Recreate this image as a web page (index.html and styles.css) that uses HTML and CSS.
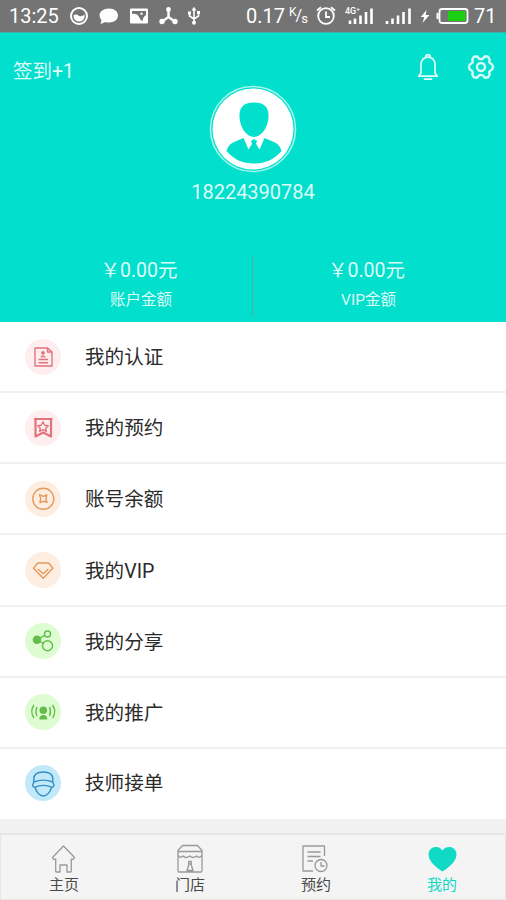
FILE: index.html
```html
<!DOCTYPE html>
<html lang="zh-CN">
<head>
<meta charset="utf-8">
<title>我的</title>
<link rel="stylesheet" href="styles.css">
</head>
<body>
<div class="app">
  <div class="status">
    <div class="status-left">
      <span class="time">13:25</span>
      <svg width="20" height="20" viewBox="0 0 20 20"><circle cx="10" cy="10" r="8" fill="none" stroke="#fff" stroke-width="2"/><path d="M4.500 9.500Q7 7.500 10 10Q13 11 15.500 8.500A5.600 5.600 0 1 1 4.500 9.500Z" fill="#fff"/></svg>
      <svg width="20" height="20" viewBox="0 0 20 20"><path d="M10 2.500C15.500 2.500 19 5.500 19 9.500S15.500 16.500 10 16.500Q8 16.500 6.500 16L1.500 18L2.500 14Q.5 12 .5 9.500C.5 5.500 4.500 2.500 10 2.500Z" fill="#fff"/></svg>
      <svg width="20" height="20" viewBox="0 0 20 20"><path fill="#fff" fill-rule="evenodd" d="M2 2.500H18Q19 2.500 19 3.500V16.500Q19 17.500 18 17.500H2Q1 17.500 1 16.500V3.500Q1 2.500 2 2.500ZM3 5V8Q8 7 10 11Q11 14 14 15Q13 12 17 9V5ZM12.500 6.500a1.200 1.200 0 1 0 .1 0Z"/></svg>
      <svg width="20" height="20" viewBox="0 0 20 20"><g stroke="#fff" stroke-width="2.400" fill="#fff"><path d="M9.500 4V11L4 15M9.500 11L15 15" fill="none"/><circle cx="9.500" cy="3.500" r="1.200"/><circle cx="3" cy="15.500" r="1.500"/><circle cx="16" cy="15.500" r="1.500"/></g></svg>
      <svg class="usb" width="14" height="20" viewBox="0 0 14 20"><path d="M7 3V17M2.500 7V10L7 13M11.500 6V10L7 13" fill="none" stroke="#fff" stroke-width="1.600"/><path d="M7 .8L9.500 4.500H4.500ZM1 5.500H4V8.500H1ZM10 5H13V8H10Z" fill="#fff"/><circle cx="7" cy="16.800" r="2" fill="#fff"/></svg>
    </div>
    <div class="status-right">
      <span class="speed">0.17</span>
      <span class="unit"><sup>K</sup>/<sub>s</sub></span>
      <svg class="alarm" width="20" height="20" viewBox="0 0 20 20"><g fill="none" stroke="#fff" stroke-width="1.800"><circle cx="10" cy="10" r="7.800"/><path d="M10 5.500V11H14M1 4.500L5 1.200M19 4.500L15 1.200"/></g></svg>
      <span class="network"><span class="generation">4G⁺</span><svg width="30" height="20" viewBox="0 0 30 20"><path d="M4 18V14.500M9 18V12.500M14.500 18V9.500M20 18V6M25.500 18V2.500" stroke="#fff" stroke-width="2.600"/></svg></span>
      <svg class="signal" width="28" height="20" viewBox="0 0 28 20"><path d="M2 18V15M7.500 18V12.500M13 18V9.500M18.500 18V6M24.500 18V2.500" stroke="#fff" stroke-width="2.600"/></svg>
      <svg class="bolt" width="10" height="20" viewBox="0 0 10 20"><path d="M6.500 4L.8 11H4.300L2.500 17L9.500 9H5.700Z" fill="#fff"/></svg>
      <svg class="battery" width="34" height="20" viewBox="0 0 34 20"><rect x="3.500" y="3" width="28" height="14" rx="2.500" fill="none" stroke="#fff" stroke-width="1.800"/><path d="M1.500 7V13" stroke="#fff" stroke-width="2"/><path d="M12 5H29.500V15H12Z" fill="#1bd013"/></svg>
      <span class="level">71</span>
    </div>
  </div>

  <header class="profile">
    <div class="toolbar">
      <span class="checkin">签到+1</span>
      <div class="actions">
        <svg width="24" height="30" viewBox="0 0 24 30"><g fill="none" stroke="#fff" stroke-opacity=".88" stroke-width="1.700" stroke-linecap="round" stroke-linejoin="round"><path d="M10 4V3Q10 1.700 12 1.700T14 3V4M5 20V11C5 7 8 4.200 12 4.200S19 7 19 11V20L21.300 23.200H2.700ZM8.500 26.200H15.500"/></g></svg>
        <svg width="28" height="28" viewBox="0 0 28 28"><g fill="none" stroke="#fff" stroke-opacity=".85" stroke-width="2.400" stroke-linejoin="round"><path d="M7 2.700L10 2.200L12 4.600Q14 5.600 16 4.600L18 2.200L21 2.700L22.700 5.500L22.200 8Q23 9.500 25.200 10.500L26 13L25.200 15.500Q23 16.500 22.200 18L22.700 20.500L21 23.300L18 23.800L16 21.400Q14 20.400 12 21.400L10 23.800L7 23.300L5.300 20.500L5.800 18Q5 16.500 2.800 15.500L2 13L2.800 10.500Q5 9.500 5.800 8L5.300 5.500Z"/><circle cx="14" cy="13" r="4"/></g></svg>
      </div>
    </div>
    <svg class="avatar" width="88" height="88" viewBox="0 0 88 88"><circle cx="44" cy="44" r="42.500" fill="none" stroke="#a5f5e9" stroke-width="1.600"/><circle cx="44" cy="44" r="40.500" fill="#fff"/><path d="M45 17.500C55 17.500 60 22 59.500 32C59 43 52 52 45 52S31 43 30.500 32C30 22 35 17.500 45 17.500ZM34.500 53L39.500 64.500L43 59L42 56L45 54L48 56L47 59L50.500 64.500L55.500 53L66 57.500Q71 60 72.500 66Q62 78.500 45 78.500T17.500 66Q19 60 24 57.500Z" fill="#02dfcd"/><path d="M43 59L41.500 66L45 73L48.500 66L47 59Z" fill="#02dfcd"/></svg>
    <div class="phone">18224390784</div>
    <div class="balances">
      <div class="balance"><div class="amount">￥0.00元</div><div class="caption">账户金额</div></div>
      <div class="balance"><div class="amount">￥0.00元</div><div class="caption">VIP金额</div></div>
    </div>
  </header>

  <main class="menu">
    <div class="row"><span class="badge red"><svg viewBox="0 0 36 36"><path d="M10 9H22.500L27 13V27H10ZM22.500 9V13H27M13.500 20.500H23M13.500 23.700H23"/><circle class="solid" cx="18" cy="13.800" r="1.900"/><path class="solid" d="M15 18.300Q18 14 21 18.300Z"/></svg></span><span class="label">我的认证</span></div>
    <div class="row"><span class="badge red"><svg viewBox="0 0 36 36"><path class="bold" d="M9 9H27.500M10.500 9V26.500L18.200 22.500L26 26.500V9"/><path d="M18 11.700L19.700 15.200L23.300 15.700L20.700 18.200L21.400 21.300L18 19.700L14.600 21.300L15.300 18.200L12.700 15.700L16.300 15.200Z"/></svg></span><span class="label">我的预约</span></div>
    <div class="row"><span class="badge orange"><svg viewBox="0 0 36 36"><circle cx="18.300" cy="17.800" r="10.500"/><path d="M14.500 13.700L18.300 15.300L21.800 14L20.800 17.800L22 21.300L18.300 20.300L14.800 21.500L15.800 17.800Z"/></svg></span><span class="label">账号余额</span></div>
    <div class="row"><span class="badge orange"><svg viewBox="0 0 36 36"><path d="M12.800 11H23.700L27.800 16.300L18.200 26.200L8.500 16.300ZM13 17L18.200 21.700L23.400 17"/></svg></span><span class="label">我的VIP</span></div>
    <div class="row"><span class="badge green"><svg viewBox="0 0 36 36"><circle class="solid" cx="12" cy="16.700" r="4.300"/><path d="M15 15L20 12.200M15 18.500L18.500 20.500"/><circle cx="22.500" cy="11" r="3"/><circle cx="22.500" cy="22.700" r="5"/></svg></span><span class="label">我的分享</span></div>
    <div class="row"><span class="badge green"><svg viewBox="0 0 36 36"><circle class="solid" cx="18.300" cy="16.300" r="3.800"/><path class="solid" d="M14.300 25.500Q14.300 21 18.300 21T22.300 25.500Z"/><path d="M12 13Q10 17.500 12 22M9 11Q4.500 17.500 9 24M24.500 13Q26.500 17.500 24.500 22M27.500 11Q32 17.500 27.500 24"/></svg></span><span class="label">我的推广</span></div>
    <div class="row"><span class="badge blue"><svg viewBox="0 0 36 36"><path d="M8.800 17V14Q8.800 7 18.300 7T27.800 14V17M8.800 17Q18.300 13.300 27.800 17L29 20Q29 22 27 22.300Q18.300 18.500 9.600 22.300Q7.600 22 7.600 20ZM10 22.500C11.500 27.500 15 31 18.300 31S25.100 27.500 26.600 22.500"/></svg></span><span class="label">技师接单</span></div>
  </main>

  <nav class="tabs">
    <div class="tab"><svg width="30" height="30" viewBox="0 0 30 30"><path d="M14.500 2L25.500 13.500L24 15.500L22.300 15V27Q22.300 28 21.500 28H18V21H11V28H7.500Q6.700 28 6.700 27V15L5 15.500L3.500 13.500Z"/></svg><span>主页</span></div>
    <div class="tab"><svg width="30" height="30" viewBox="0 0 30 30"><path d="M7.500 1.500H22.500L27 6.500V27Q27 28 26 28H4Q3 28 3 27V6.500ZM3 7.500H27M3 11Q5 15 8 12Q11 15 14.800 12Q18 15 21.500 12Q25 15 27 11M12 26.500L14 20H16L18 26.500ZM13.700 17.500H16.300V20H13.700Z"/></svg><span>门店</span></div>
    <div class="tab"><svg width="30" height="30" viewBox="0 0 30 30"><path d="M12 27H2V2H23.500V12M6.500 8H19.500M6.500 12.500H19.500M6.500 17H12"/><circle cx="20" cy="21.500" r="6"/><path d="M20 18V22H23.500"/></svg><span>预约</span></div>
    <div class="tab active"><svg width="30" height="30" viewBox="0 0 30 30"><path d="M15.500 27.500C9.500 23.500 1.500 17.500 1.500 10.500C1.500 2.500 11.500 .5 15.500 6.500C19.500 .5 29.500 2.500 29.500 10.500C29.500 17.500 21.500 23.500 15.500 27.500Z"/></svg><span>我的</span></div>
  </nav>
</div>
</body>
</html>
```
FILE: styles.css
```css
* { box-sizing: border-box; }

body {
  margin: 0;
  font-family: Roboto, "Noto Sans CJK SC", sans-serif;
  color: #2b2b2b;
  background: #f1f1f1;
}

svg { display: block; flex: none; }

.app {
  width: 506px;
  height: 900px;
  display: flex;
  flex-direction: column;
  overflow: hidden;
}

/* System status bar */
.status {
  flex: none;
  height: 33px;
  display: flex;
  justify-content: space-between;
  align-items: center;
  padding: 0 10px 0 9px;
  background: #747474;
  border-bottom: 1px solid #3aafa5;
  color: #fff;
  font-size: 20px;
  line-height: 32px;
}
.status-left, .status-right { display: flex; align-items: center; }
.status-left { gap: 10px; }
.usb { margin-left: -2px; }
.time { width: 50px; }
.speed { width: 43px; }
.unit { width: 18px; font-size: 16px; white-space: nowrap; line-height: 20px; letter-spacing: -1px; }
.unit sup, .unit sub { font-size: 12px; line-height: 0; }
.unit sup { vertical-align: 5px; }
.unit sub { vertical-align: -2px; font-size: 13px; }
.alarm { margin-left: 9px; }
.network { position: relative; margin-left: 10px; }
.generation {
  position: absolute;
  left: -1px;
  top: 1px;
  font-size: 9px;
  font-weight: 500;
  line-height: 9px;
}
.signal { margin-left: 9px; }
.bolt { margin-left: 7px; }
.battery { margin-left: 6px; }
.level { width: 22px; margin-left: 4px; }

/* Profile header */
.profile {
  flex: none;
  height: 289px;
  display: flex;
  flex-direction: column;
  align-items: center;
  background: #02dfcd;
  color: rgba(255, 255, 255, 0.88);
}
.toolbar {
  width: 100%;
  height: 52px;
  display: flex;
  justify-content: space-between;
  align-items: flex-start;
  padding: 20px 11px 0 13px;
}
.checkin { padding-top: 1px; font-size: 19.5px; line-height: 36px; }
.actions { display: flex; align-items: center; gap: 27px; }
.avatar { margin-bottom: 5px; }
.phone { font-size: 20px; line-height: 28px; }
.balances {
  width: 100%;
  height: 61px;
  margin-top: 50px;
  display: flex;
}
.balance { flex: none; width: 50%; text-align: center; }
.balance:first-child { padding-left: 28px; border-right: 1px solid #55aaa2; }
.balance:last-child { padding-right: 24px; }
.amount { padding-right: 2px; font-size: 19.5px; line-height: 30px; }
.caption { padding-left: 2px; font-size: 15.5px; line-height: 28px; }

/* Menu list */
.menu {
  flex: none;
  height: 497px;
  display: grid;
  grid-template-rows: repeat(6, 1fr) 70px;
  background: #fff;
}
.row {
  display: flex;
  align-items: center;
  gap: 24px;
  padding-left: 25px;
  border-bottom: 2px solid #f1f1f1;
  font-size: 19.6px;
  line-height: 30px;
}
.row:last-child { border-bottom-color: transparent; }
.label { padding-top: 3px; }
.badge { width: 36px; height: 36px; border-radius: 50%; }
.badge svg {
  width: 36px;
  height: 36px;
  fill: none;
  stroke: currentColor;
  stroke-width: 1.4;
  stroke-linejoin: round;
}
.badge .solid { fill: currentColor; stroke: none; }
.badge .bold { stroke-width: 2.2; }
.red { background: #feeef0; color: #e2737a; }
.orange { background: #feeee1; color: #e39a5c; }
.green { background: #defcd2; color: #63bd48; }
.blue { background: #c1e9fa; color: #348fc5; }

/* Bottom navigation */
.tabs {
  flex: none;
  height: 67px;
  margin-top: 14px;
  display: grid;
  grid-template-columns: repeat(4, 1fr);
  background: #f4f4f4;
  border: 1px solid #e6e6e6;
  border-top-width: 2px;
}
.tab {
  display: flex;
  flex-direction: column;
  align-items: center;
  padding-top: 9px;
  font-size: 15px;
  line-height: 22px;
  color: #4a4a4a;
}
.tab svg { fill: none; stroke: #999; stroke-width: 1.3; stroke-linejoin: round; }
.tab.active { color: #10d9c5; }
.tab.active svg { fill: #10d9c5; stroke: none; }
```
